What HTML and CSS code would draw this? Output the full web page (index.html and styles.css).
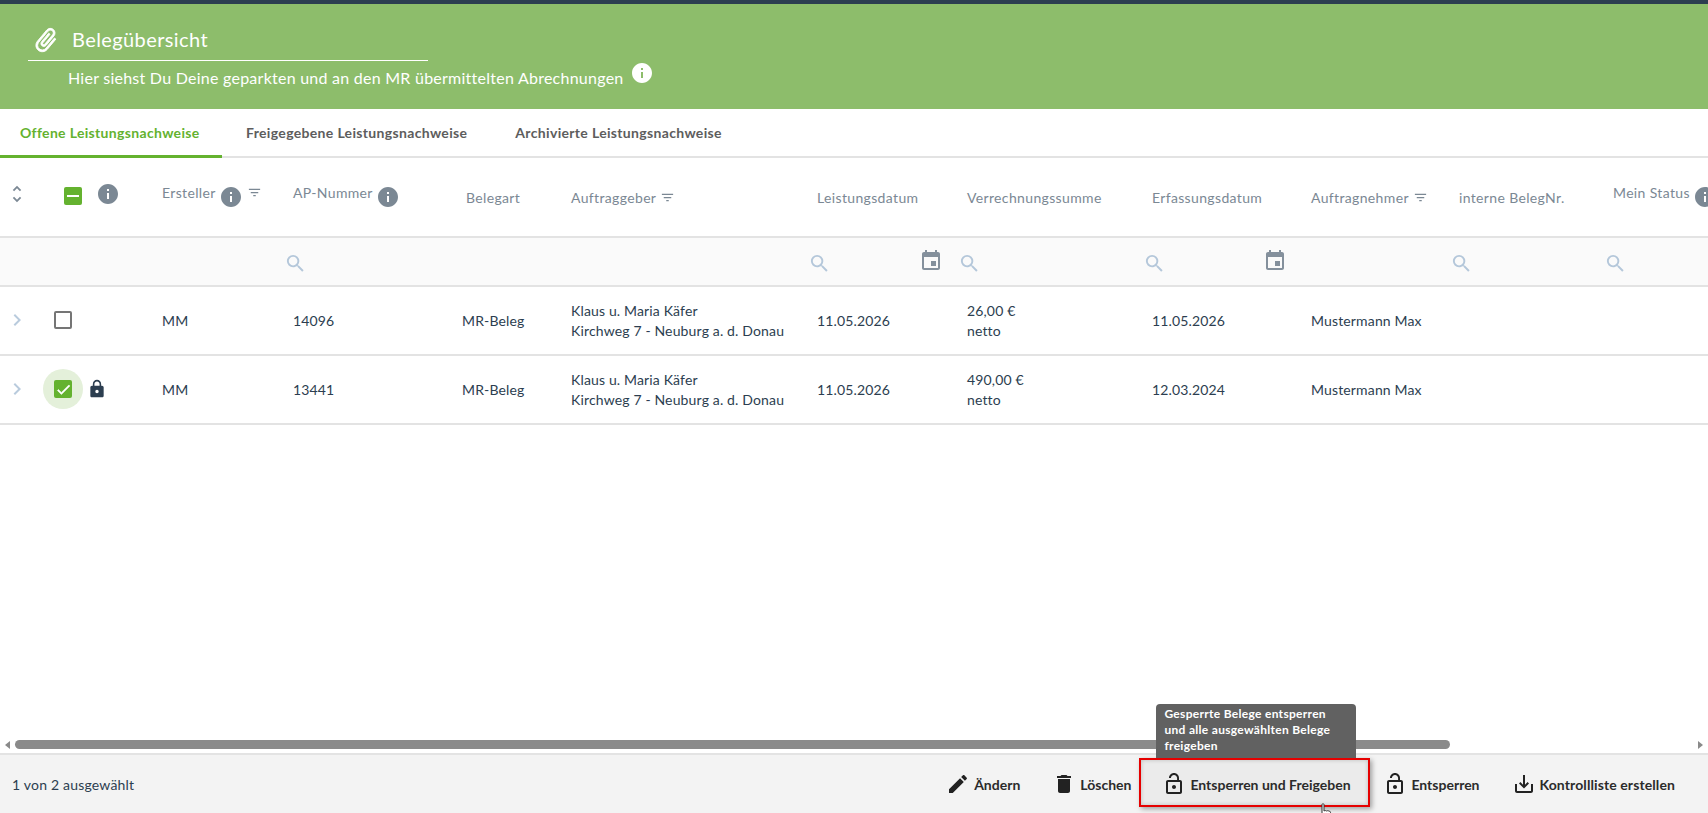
FILE: index.html
```html
<!DOCTYPE html>
<html lang="de">
<head>
    <meta charset="UTF-8">
    <title>Belegübersicht</title>
    <link rel="stylesheet" href="styles.css">
</head>
<body>
    <svg class="sprites" xmlns="http://www.w3.org/2000/svg">
        <symbol id="i-search" viewBox="0 0 24 24"><path d="M15.5 14h-.79l-.28-.27A6.471 6.471 0 0 0 16 9.5 6.5 6.5 0 1 0 9.5 16c1.61 0 3.09-.59 4.23-1.57l.27.28v.79l5 4.99L20.49 19l-4.99-5zm-6 0C7.01 14 5 11.99 5 9.5S7.01 5 9.5 5 14 7.01 14 9.5 11.99 14 9.5 14z"/></symbol>
        <symbol id="i-event" viewBox="0 0 24 24"><path d="M17 12h-5v5h5v-5zM16 1v2H8V1H6v2H5c-1.11 0-1.99.9-1.99 2L3 19c0 1.1.89 2 2 2h14c1.1 0 2-.9 2-2V5c0-1.1-.9-2-2-2h-1V1h-2zm3 18H5V8h14v11z"/></symbol>
        <symbol id="i-filter" viewBox="0 0 24 24"><path d="M10 18h4v-2h-4v2zM3 6v2h18V6H3zm3 7h12v-2H6v2z"/></symbol>
        <symbol id="i-info" viewBox="0 0 24 24"><path d="M12 2C6.48 2 2 6.48 2 12s4.48 10 10 10 10-4.48 10-10S17.52 2 12 2zm1 15h-2v-6h2v6zm0-8h-2V7h2v2z"/></symbol>
        <symbol id="i-lock" viewBox="0 0 24 24"><path d="M18 8h-1V6c0-2.76-2.24-5-5-5S7 3.24 7 6v2H6c-1.1 0-2 .9-2 2v10c0 1.1.9 2 2 2h12c1.1 0 2-.9 2-2V10c0-1.1-.9-2-2-2zm-6 9c-1.1 0-2-.9-2-2s.9-2 2-2 2 .9 2 2-.9 2-2 2zm3.1-9H8.9V6c0-1.71 1.39-3.1 3.1-3.1 1.71 0 3.1 1.39 3.1 3.1v2z"/></symbol>
        <symbol id="i-unlock" viewBox="0 0 24 24"><path d="M12 17c1.1 0 2-.9 2-2s-.9-2-2-2-2 .9-2 2 .9 2 2 2zm6-9h-1V6c0-2.76-2.24-5-5-5S7 3.24 7 6h1.9c0-1.71 1.39-3.1 3.1-3.1 1.71 0 3.1 1.39 3.1 3.1v2H6c-1.1 0-2 .9-2 2v10c0 1.1.9 2 2 2h12c1.1 0 2-.9 2-2V10c0-1.1-.9-2-2-2zm0 12H6V10h12v10z"/></symbol>
        <symbol id="i-chevron" viewBox="0 0 24 24"><path d="M10 6L8.59 7.41 13.17 12l-4.58 4.59L10 18l6-6z"/></symbol>
    </svg>

    <div class="top-line"></div>

    <header class="page-head">
        <div class="page-title">
            <svg class="clip-icon" viewBox="0 0 24 24"><path d="M16.5 6v11.5c0 2.21-1.79 4-4 4s-4-1.79-4-4V5c0-1.38 1.12-2.5 2.5-2.5s2.5 1.12 2.5 2.5v10.5c0 .55-.45 1-1 1s-1-.45-1-1V6H10v9.5c0 1.38 1.12 2.5 2.5 2.5s2.5-1.12 2.5-2.5V5c0-2.21-1.79-4-4-4S7 2.79 7 5v12.5c0 3.04 2.46 5.5 5.5 5.5s5.5-2.46 5.5-5.5V6h-1.5z"/></svg>
            <h1>Belegübersicht</h1>
        </div>
        <div class="page-sub">
            <span>Hier siehst Du Deine geparkten und an den MR übermittelten Abrechnungen</span>
            <svg class="sub-info"><use href="#i-info"/></svg>
        </div>
    </header>

    <nav class="tabs">
        <a class="tab active">Offene Leistungsnachweise</a>
        <a class="tab">Freigegebene Leistungsnachweise</a>
        <a class="tab">Archivierte Leistungsnachweise</a>
    </nav>

    <main class="table">
        <div class="grid head-row">
            <div class="cell">
                <svg class="unfold" viewBox="0 0 24 24"><path d="M12 5.83L15.17 9l1.41-1.41L12 3 7.41 7.59 8.83 9 12 5.83zm0 12.34L8.83 15l-1.41 1.41L12 21l4.59-4.59L15.17 15 12 18.17z"/></svg>
            </div>
            <div class="cell select-head">
                <span class="check indeterminate"><span class="dash"></span></span>
                <svg class="head-info first"><use href="#i-info"/></svg>
            </div>
            <div class="cell">
                <span class="raised">Ersteller</span>
                <svg class="head-info"><use href="#i-info"/></svg>
                <svg class="filter raised"><use href="#i-filter"/></svg>
            </div>
            <div class="cell">
                <span class="raised">AP-Nummer</span>
                <svg class="head-info"><use href="#i-info"/></svg>
            </div>
            <div class="cell indent">Belegart</div>
            <div class="cell">Auftraggeber <svg class="filter"><use href="#i-filter"/></svg></div>
            <div class="cell">Leistungsdatum</div>
            <div class="cell">Verrechnungssumme</div>
            <div class="cell">Erfassungsdatum</div>
            <div class="cell">Auftragnehmer <svg class="filter"><use href="#i-filter"/></svg></div>
            <div class="cell">interne BelegNr.</div>
            <div class="cell">
                <span class="raised">Mein Status</span>
                <svg class="head-info"><use href="#i-info"/></svg>
            </div>
        </div>

        <div class="grid filter-row">
            <div></div><div></div><div></div>
            <div class="cell"><svg class="search"><use href="#i-search"/></svg></div>
            <div></div><div></div>
            <div class="cell date-filter"><svg class="search"><use href="#i-search"/></svg><svg class="calendar"><use href="#i-event"/></svg></div>
            <div class="cell"><svg class="search"><use href="#i-search"/></svg></div>
            <div class="cell date-filter"><svg class="search"><use href="#i-search"/></svg><svg class="calendar"><use href="#i-event"/></svg></div>
            <div></div>
            <div class="cell"><svg class="search"><use href="#i-search"/></svg></div>
            <div class="cell"><svg class="search"><use href="#i-search"/></svg></div>
        </div>

        <div class="grid data-row">
            <div class="cell"><svg class="expand"><use href="#i-chevron"/></svg></div>
            <div class="cell select-cell"><span class="check empty"></span></div>
            <div class="cell">MM</div>
            <div class="cell">14096</div>
            <div class="cell">MR-Beleg</div>
            <div class="cell two-lines"><span>Klaus u. Maria Käfer</span><span>Kirchweg 7 - Neuburg a. d. Donau</span></div>
            <div class="cell">11.05.2026</div>
            <div class="cell two-lines"><span>26,00 €</span><span>netto</span></div>
            <div class="cell">11.05.2026</div>
            <div class="cell">Mustermann Max</div>
            <div></div><div></div>
        </div>

        <div class="grid data-row">
            <div class="cell"><svg class="expand"><use href="#i-chevron"/></svg></div>
            <div class="cell select-cell">
                <span class="halo">
                    <span class="check checked">
                        <svg viewBox="0 0 24 24"><path d="M9 16.2L4.8 12l-1.4 1.4L9 19 21 7l-1.4-1.4z"/></svg>
                    </span>
                </span>
                <svg class="row-lock"><use href="#i-lock"/></svg>
            </div>
            <div class="cell">MM</div>
            <div class="cell">13441</div>
            <div class="cell">MR-Beleg</div>
            <div class="cell two-lines"><span>Klaus u. Maria Käfer</span><span>Kirchweg 7 - Neuburg a. d. Donau</span></div>
            <div class="cell">11.05.2026</div>
            <div class="cell two-lines"><span>490,00 €</span><span>netto</span></div>
            <div class="cell">12.03.2024</div>
            <div class="cell">Mustermann Max</div>
            <div></div><div></div>
        </div>
    </main>

    <div class="hscroll">
        <span class="arrow left"></span>
        <div class="track"><div class="thumb"></div></div>
        <span class="arrow right"></span>
    </div>

    <footer class="actions">
        <span class="selected-count">1 von 2 ausgewählt</span>
        <div class="buttons">
            <button class="btn btn-edit">
                <svg viewBox="0 0 24 24"><path d="M3 17.25V21h3.75L17.81 9.94l-3.75-3.75L3 17.25zM20.71 7.04c.39-.39.39-1.02 0-1.41l-2.34-2.34c-.39-.39-1.02-.39-1.41 0l-1.83 1.83 3.75 3.75 1.83-1.83z"/></svg>
                Ändern
            </button>
            <button class="btn btn-delete">
                <svg viewBox="0 0 24 24"><path d="M6 19c0 1.1.9 2 2 2h8c1.1 0 2-.9 2-2V7H6v12zM19 4h-3.5l-1-1h-5l-1 1H5v2h14V4z"/></svg>
                Löschen
            </button>
            <div class="highlight">
                <div class="tooltip">Gesperrte Belege entsperren und alle ausgewählten Belege freigeben</div>
                <button class="btn btn-release">
                    <svg><use href="#i-unlock"/></svg>
                    Entsperren und Freigeben
                </button>
                <svg class="hand" viewBox="0 0 14 20"><path d="M4 1.5c0-1 2-1 2 0V8c1-.6 2-.6 2.6 0 .9-.5 1.9-.4 2.4.3.8-.2 1.5.2 1.5 1V14c0 2-1 3-1 5H5c-.5-2-2-3-3.500-6-.5-1 .7-2 1.500-1L4 13z" fill="#fff" stroke="#333" stroke-width="1"/></svg>
            </div>
            <button class="btn btn-unlock">
                <svg><use href="#i-unlock"/></svg>
                Entsperren
            </button>
            <button class="btn btn-list">
                <svg viewBox="0 0 24 24"><path d="M19 12v7H5v-7H3v7c0 1.1.9 2 2 2h14c1.1 0 2-.9 2-2v-7h-2zm-6 .67l2.59-2.58L17 11.5l-5 5-5-5 1.41-1.41L11 12.67V3h2v9.67z"/></svg>
                Kontrollliste erstellen
            </button>
        </div>
    </footer>
</body>
</html>
```

FILE: styles.css
```css
* {
    box-sizing: border-box;
}
body {
    margin: 0;
    height: 100vh;
    display: flex;
    flex-direction: column;
    overflow: hidden;
    font-family: Lato, "Open Sans", sans-serif;
    font-size: 14px;
    color: #2c3e50;
    background: #fff;
}
svg {
    flex-shrink: 0;
}
.sprites {
    display: none;
}
.top-line {
    height: 4px;
    background: #2c3e50;
}

/* green title area */
.page-head {
    height: 105px;
    background: #8dbd6b;
    color: #fff;
    padding-top: 21px;
}
.page-title {
    width: 400px;
    height: 36px;
    margin-left: 28px;
    padding: 0 0 4px 4px;
    display: flex;
    align-items: center;
    border-bottom: 1px solid #fff;
}
.page-title h1 {
    margin: -3px 0 0 12px;
    font-size: 20px;
    font-weight: 400;
    letter-spacing: 0.4px;
}
.clip-icon {
    width: 28px;
    height: 28px;
    margin-top: -1px;
    fill: #fff;
    stroke: #fff;
    stroke-width: 0.7;
    transform: rotate(40deg);
}
.page-sub {
    display: flex;
    align-items: flex-start;
    margin-left: 68px;
    font-size: 16px;
    letter-spacing: 0.25px;
}
.page-sub span {
    padding-top: 7px;
}
.sub-info {
    width: 24px;
    height: 24px;
    margin-left: 6px;
    fill: #fff;
}

/* tabs */
.tabs {
    display: flex;
    height: 49px;
    border-bottom: 2px solid #e3e3e3;
}
.tab {
    height: 49px;
    padding: 15px 24px 0;
    font-size: 14px;
    font-weight: 700;
    letter-spacing: 0.33px;
    color: #5d5d5d;
    white-space: nowrap;
}
.tab.active {
    width: 222px;
    padding: 15px 0 0 20px;
    color: #64b22f;
    border-bottom: 3px solid #64b22f;
}

/* table */
.table {
    flex: 1;
    overflow: hidden;
}
.grid {
    display: grid;
    grid-template-columns: 46px 116px 131px 169px 109px 246px 150px 185px 159px 148px 154px 95px;
    border-bottom: 2px solid #e3e3e3;
    width: 1708px;
}
.cell {
    display: flex;
    align-items: center;
    white-space: nowrap;
}
.head-row {
    height: 80px;
    color: #7b8894;
    font-size: 14px;
    letter-spacing: 0.35px;
}
.head-row .indent {
    padding-left: 4px;
}
.raised {
    margin-top: -9px;
}
.unfold {
    width: 22px;
    height: 28px;
    margin-left: 6px;
    margin-top: -6px;
    fill: #7b8894;
}
.select-head {
    padding-left: 18px;
    margin-top: -3px;
}
.head-info {
    width: 24px;
    height: 24px;
    margin-left: 3px;
    fill: #7b8894;
}
.head-info.first {
    margin-left: 14px;
    margin-top: -3px;
}
.filter {
    width: 15px;
    height: 15px;
    margin-left: 4px;
    fill: #7b8894;
}
.filter-row {
    height: 49px;
    background: #fafafa;
}
.filter-row .cell {
    margin-left: -9px;
}
.date-filter {
    justify-content: space-between;
    padding-right: 24px;
}
.search {
    width: 23px;
    height: 23px;
    margin-top: 3px;
    fill: #b4c7da;
}
.calendar {
    width: 24px;
    height: 24px;
    margin-top: -2px;
    margin-right: 0;
    fill: #84909c;
}
.data-row {
    height: 69px;
    font-size: 14px;
    letter-spacing: 0.15px;
}
.data-row .cell {
    padding-bottom: 1px;
}
.data-row .two-lines {
    flex-direction: column;
    align-items: flex-start;
    justify-content: center;
    line-height: 20px;
    padding-bottom: 0;
}
.expand {
    width: 24px;
    height: 24px;
    margin-left: 5px;
    fill: #b9cbdd;
}
.data-row .select-cell {
    padding-left: 8px;
}
.check {
    display: flex;
    align-items: center;
    justify-content: center;
    width: 18px;
    height: 18px;
    border-radius: 2px;
}
.check.empty {
    border: 2px solid #757575;
}
.check.checked,
.check.indeterminate {
    background: #64b22f;
}
.check.checked svg {
    width: 17px;
    height: 17px;
    fill: #fff;
    stroke: #fff;
    stroke-width: 0.8;
}
.dash {
    width: 12px;
    height: 2px;
    background: #fff;
}
.halo {
    display: flex;
    align-items: center;
    justify-content: center;
    width: 40px;
    height: 40px;
    margin-left: -11px;
    border-radius: 50%;
    background: #e4f0da;
}
.row-lock {
    width: 20px;
    height: 20px;
    margin-left: 4px;
    fill: #2c3e50;
}

/* scrollbar */
.hscroll {
    display: flex;
    align-items: flex-start;
    height: 12px;
    padding: 0 5px;
    margin-bottom: 1px;
}
.track {
    flex: 1;
    height: 9px;
    padding: 0 8px 0 5px;
}
.thumb {
    width: 1435px;
    height: 9px;
    border-radius: 5px;
    background: #8a8a8a;
}
.arrow {
    width: 0;
    height: 0;
    margin-top: 1px;
    border-top: 4px solid transparent;
    border-bottom: 4px solid transparent;
}
.arrow.left {
    border-right: 5px solid #8a8a8a;
}
.arrow.right {
    border-left: 5px solid #8a8a8a;
}

/* bottom action bar */
.actions {
    height: 60px;
    display: flex;
    align-items: center;
    justify-content: space-between;
    padding: 0 33px 0 12px;
    background: #f3f3f3;
    border-top: 2px solid #e3e3e3;
}
.selected-count {
    font-size: 14px;
    letter-spacing: 0.2px;
    color: #2c3e50;
}
.buttons {
    display: flex;
    align-items: center;
}
.btn {
    display: flex;
    align-items: center;
    gap: 4px;
    padding: 0;
    border: 0;
    background: none;
    font-family: inherit;
    font-size: 14px;
    font-weight: 700;
    color: #2b2b2b;
    white-space: nowrap;
}
.btn svg {
    width: 24px;
    height: 24px;
    fill: #222;
}
.btn-delete {
    margin-left: 32px;
}
.highlight {
    position: relative;
    margin-left: 8px;
    margin-top: -3px;
    width: 231px;
    height: 49px;
    border: 2px solid #e60000;
    box-shadow: 2px 2px 5px rgba(0, 0, 0, 0.35);
}
.btn-release {
    width: 100%;
    height: 100%;
    padding: 3px 0 0 21px;
    background: #ebebeb;
    box-shadow: inset 0 0 4px rgba(0, 0, 0, 0.2);
}
.btn-unlock {
    margin-left: 13px;
}
.btn-list {
    margin-left: 32px;
    letter-spacing: 0.1px;
}
.tooltip {
    position: absolute;
    left: 15px;
    bottom: 47px;
    width: 200px;
    height: 54px;
    padding: 2px 24px 2px 8px;
    border-radius: 4px 4px 0 0;
    background: #616161;
    color: #fff;
    font-size: 12px;
    font-weight: 700;
    letter-spacing: 0.3px;
    line-height: 16px;
}
.hand {
    position: absolute;
    left: 177px;
    top: 43px;
    width: 14px;
    height: 20px;
}
```
